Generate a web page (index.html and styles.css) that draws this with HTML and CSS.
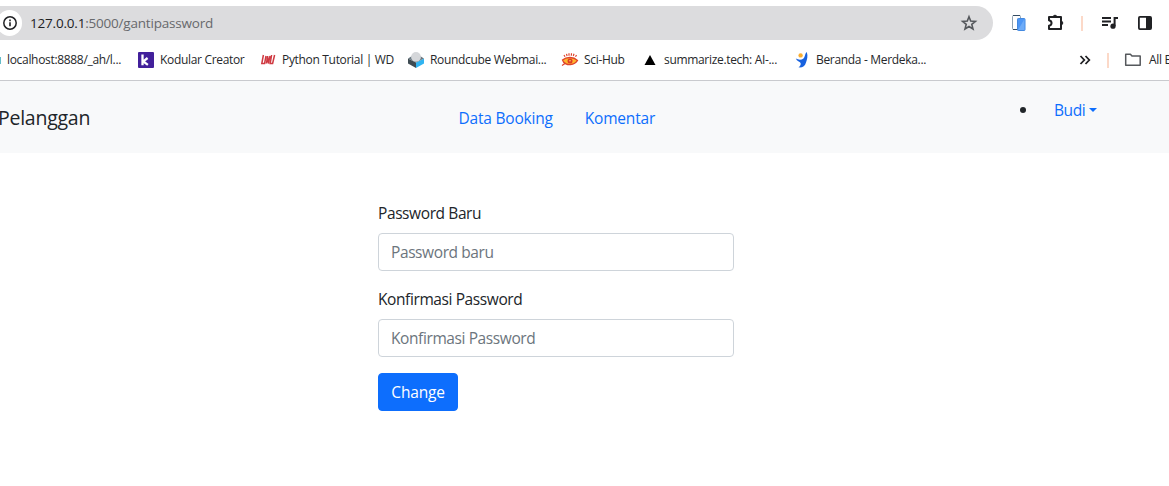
FILE: index.html
```html
<!DOCTYPE html>
<html lang="id">
<head>
<meta charset="utf-8">
<title>Ganti Password</title>
<link rel="stylesheet" href="styles.css">
</head>
<body>
<header class="browser">
  <div class="toolbar">
    <div class="address">
      <span class="site-info"><svg width="16" height="16" viewBox="0 0 16 16"><circle cx="8" cy="8" r="6.2" fill="none" stroke="#202124" stroke-width="1.5"/><path d="M7.2 7.2h1.6v4H7.2zM7.2 4.6h1.6v1.6H7.2z" fill="#202124"/></svg></span>
      <span class="url"><span class="host">127.0.0.1</span>:5000/gantipassword</span>
      <svg class="star" width="18" height="18" viewBox="0 0 18 18"><path d="M9 2.8l1.7 4.3 4.7.3-3.6 3 1.2 4.6L9 12.5 5 15l1.2-4.6-3.6-3 4.7-.3z" fill="none" stroke="#55585c" stroke-width="1.6"/></svg>
    </div>
    <svg class="devices" width="16" height="18" viewBox="0 0 16 18"><rect x="1.5" y="1.5" width="8" height="14" rx="1" fill="#fff" stroke="#8fa3b4"/><path d="M2 1.5h7M2 15.5h5" stroke="#344c63"/><rect x="6.5" y="4.5" width="7.5" height="12" rx=".8" fill="#4d96f5" stroke="#4389e0"/><path d="M7 16l6.5-11v11z" fill="#6eacf8"/></svg>
    <svg class="puzzle" width="20" height="20" viewBox="0 0 20 20"><path d="M3 4h12v12H3v-3.2c3.4-.8 3.4-4.8 0-5.6z" fill="none" stroke="#202124" stroke-width="2" stroke-linejoin="round"/><path d="M7.2 4a1.8 1.8 0 0 1 3.6 0zM15 8.2a1.8 1.8 0 0 1 0 3.6z" fill="#202124" stroke="#202124"/></svg>
    <i class="divider"></i>
    <svg class="media" width="18" height="16" viewBox="0 0 18 16"><path d="M1 3h9M1 6.5h9M1 10h6" stroke="#202124" stroke-width="1.8"/><path d="M12.6 11V2H17v2h-2.4v7z" fill="#202124"/><circle cx="12" cy="11.2" r="2.6" fill="#202124"/></svg>
    <svg class="panel" width="16" height="16" viewBox="0 0 16 16"><rect x="1.9" y="1.9" width="12.2" height="12.2" rx="1" fill="none" stroke="#202124" stroke-width="1.8"/><path d="M9 2h5v12H9z" fill="#202124"/></svg>
  </div>
  <nav class="bookmarks">
    <span class="bm bm-local">localhost:8888/_ah/l...</span>
    <span class="bm bm-kodular"><svg width="16" height="16" viewBox="0 0 16 16"><rect width="16" height="16" rx="1" fill="#42209b"/><path d="M4.5 2.6v10.6M9.6 6L5.3 9.4l4.6 3.4" fill="none" stroke="#fff" stroke-width="2.3"/></svg>Kodular Creator</span>
    <span class="bm bm-python"><svg width="16" height="16" viewBox="0 0 16 16"><path d="M3.4 3L1.8 11.5 4.6 11.5 6 4M7.6 4L6.4 11.5M7.6 4L8.4 11.5 10 4M11.6 3L10.2 11.5 12.6 11.5 14.6 3" fill="none" stroke="#cf3a42" stroke-width="1.5"/></svg>Python Tutorial | WD</span>
    <span class="bm bm-round"><svg width="18" height="18" viewBox="0 0 18 18"><path d="M1 7.5l8 4V17l-8-4.5z" fill="#3e4b52"/><path d="M17 7.5l-8 4V17l8-4.5z" fill="#31b4f1"/><path d="M1 7.5L5 5h8l4 2.5-8 4z" fill="#687780"/><circle cx="9" cy="5.9" r="4.9" fill="#d5d7da"/></svg>Roundcube Webmai...</span>
    <span class="bm bm-sci"><svg width="18" height="16" viewBox="0 0 18 16"><path d="M1.5 8c4-3.4 11-3.4 15 .4-3 5-11 5.400-14 1.600z" fill="#ffb52c" stroke="#df432c" stroke-width="1.3"/><circle cx="9" cy="9" r="2.500" fill="#de3c25"/><circle cx="9" cy="8.800" r=".8" fill="#ffd36a"/><path d="M3 3l1 1.800M5.500 1.800l.6 2.200M8 1.200v2.500M10.500 1.200l-.2 2.500M13 1.800l-.7 2.200M15.500 3l-1 1.800M1 13.500l3-2" stroke="#df432c" stroke-width="1.200"/></svg>Sci-Hub</span>
    <span class="bm bm-sum"><svg width="12" height="12" viewBox="0 0 12 12"><path d="M6 1l5.500 10H.5z" fill="#000"/></svg>summarize.tech: AI-...</span>
    <span class="bm bm-beranda"><svg width="14" height="18" viewBox="0 0 14 18"><path d="M11.800 1c1.400 4 .2 7.600-.8 10.400-1 3.600-3.600 5.400-7.600 4.900 2-1 2.600-2.800 2.200-4.300C4.600 10.600 2 10.200.8 7.500c2.600 1.500 5.600 1.500 7.400.2C10.400 6.200 9.600 2.600 11.800 1z" fill="#1761df"/><circle cx="5.600" cy="4.400" r="2.200" fill="#f9ae31"/></svg>Beranda - Merdeka...</span>
    <svg class="more" width="12" height="12" viewBox="0 0 12 12"><path d="M1.500 2l3.800 4-3.800 4M6.500 2l3.800 4-3.800 4" fill="none" stroke="#202124" stroke-width="1.800"/></svg>
    <i class="divider"></i>
    <span class="bm bm-all"><svg width="18" height="14" viewBox="0 0 18 14"><path d="M1.700 1.200h4.700L8 3h8.200v9.300H1.700z" fill="none" stroke="#55585c" stroke-width="1.500" stroke-linejoin="round"/></svg>All B</span>
  </nav>
</header>
<nav class="navbar">
  <a class="brand">Pelanggan</a>
  <div class="links"><a class="booking">Data Booking</a><a class="komentar">Komentar</a></div>
  <div class="account"><i class="bullet"></i><a class="user">Budi</a><i class="caret"></i></div>
</nav>
<main>
  <form class="password-form">
    <label class="label-new" for="new">Password Baru</label>
    <input class="input-new" id="new" type="password" placeholder="Password baru">
    <label class="label-confirm" for="confirm">Konfirmasi Password</label>
    <input class="input-confirm" id="confirm" type="password" placeholder="Konfirmasi Password">
    <button type="button">Change</button>
  </form>
</main>
</body>
</html>
```
FILE: styles.css
```css
* { box-sizing: border-box; }
body { margin: 0; height: 486px; overflow: hidden; background: #fff; color: #212529; font: 15.5px/24px "Open Sans", "Noto Sans", sans-serif; letter-spacing: -.4px; }
svg { display: block; flex: none; }
.browser { height: 81px; padding-top: 6px; border-bottom: 1px solid #c9cace; overflow: hidden; }
.toolbar { display: flex; align-items: center; height: 34px; }
.address { display: flex; align-items: center; width: 1010px; height: 34px; margin-left: -17px; padding-left: 14px; border-radius: 17px; background: #dcdcde; flex: none; }
.site-info { display: grid; place-items: center; width: 25px; height: 26px; border-radius: 13px; background: #fff; }
.url { margin-left: 8px; font-size: 13.5px; letter-spacing: -.2px; color: #67696c; white-space: nowrap; }
.host { color: #202124; }
.star { margin-left: auto; margin-right: 15px; }
.devices { margin-left: 18px; }
.puzzle { margin-left: 19px; }
.toolbar .divider { margin-left: 15px; }
.divider { width: 2px; height: 15px; background: #fcd9c8; flex: none; }
.media { margin-left: 18px; }
.panel { margin-left: 18px; }
.bookmarks { display: flex; align-items: center; height: 40px; color: #26282b; font-size: 12px; letter-spacing: -.32px; }
.bm { display: flex; align-items: center; flex: none; white-space: nowrap; }
.bm-local { width: 138px; padding-left: 6px; border-left: 1px solid #65bcc9; height: 7px; }
.bm-kodular { width: 122px; gap: 6px; }
.bm-python { width: 147px; gap: 6px; }
.bm-round { width: 154px; gap: 5px; }
.bm-sci { width: 83px; gap: 5px; }
.bm-sum { width: 151px; gap: 8px; }
.bm-beranda { width: 284px; gap: 7px; }
.bookmarks .divider { margin-left: 16px; }
.bm-all { margin-left: 15px; gap: 7px; }
.navbar { display: grid; grid-template-columns: 458.500px 1fr 149px; height: 72px; background: #f8f9fa; }
.brand { align-self: center; font-size: 19.500px; margin: 2px 0 0 -2px; letter-spacing: -.25px; }
.links { display: flex; align-items: center; gap: 32px; margin-top: 1px; color: #0d6efd; letter-spacing: -.2px; }
.account { display: flex; align-items: center; height: 24px; margin-top: 17px; color: #0d6efd; }
.bullet { width: 6px; height: 6px; border-radius: 50%; background: #212529; }
.user { margin-left: 28px; }
.caret { margin-left: 4px; border: 4px solid transparent; border-top-color: #0d6efd; border-bottom: 0; }
.password-form { display: flex; flex-direction: column; width: 356px; margin: 48px 0 0 378px; }
label { margin-bottom: 8px; }
input { height: 38px; margin-bottom: 16px; padding: 6px 12px; border: 1px solid #ced4da; border-radius: 4px; font: inherit; letter-spacing: inherit; color: #212529; }
input::placeholder { color: #6c757d; opacity: 1; }
button { width: 80px; height: 38px; padding: 6px 11px; border: 1px solid #0d6efd; border-radius: 4px; background: #0d6efd; color: #fff; font: inherit; letter-spacing: -.2px; white-space: nowrap; }
```
